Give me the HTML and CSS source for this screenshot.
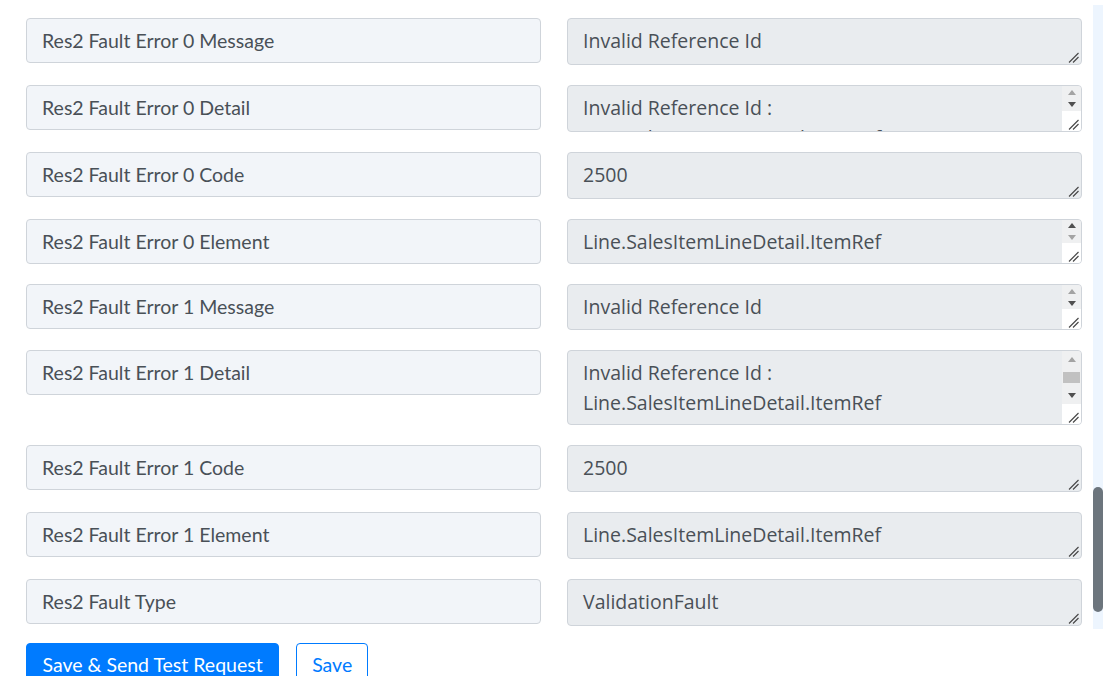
FILE: index.html
```html
<!DOCTYPE html>
<html lang="en">
<head>
<meta charset="utf-8">
<title>Response fields</title>
<link rel="stylesheet" href="styles.css">
</head>
<body>
<div class="page">
  <div class="form-area">
    <div class="fields">
      <input class="field-key" type="text" value="Res2 Fault Error 0 Message" readonly>
      <div class="field-value">
        <textarea class="value-box" readonly>Invalid Reference Id</textarea>
        <span class="grip"><svg width="11" height="11" viewBox="0 0 11 11"><path d="M1 10.5 L10.5 1 M5 10.5 L10.5 5" /></svg></span>
      </div>

      <input class="field-key" type="text" value="Res2 Fault Error 0 Detail" readonly>
      <div class="field-value">
        <textarea class="value-box" readonly>Invalid Reference Id :
Line.SalesItemLineDetail.ItemRef</textarea>
        <span class="vscroll">
          <span class="sb-arrows">
            <span class="sb-btn"><span class="tri-up off"></span></span>
            <span class="sb-btn"><span class="tri-down"></span></span>
          </span>
          <span class="sb-corner"><svg width="11" height="11" viewBox="0 0 11 11"><path d="M1 10.5 L10.5 1 M5 10.5 L10.5 5" /></svg></span>
        </span>
      </div>

      <input class="field-key" type="text" value="Res2 Fault Error 0 Code" readonly>
      <div class="field-value">
        <textarea class="value-box" readonly>2500</textarea>
        <span class="grip"><svg width="11" height="11" viewBox="0 0 11 11"><path d="M1 10.5 L10.5 1 M5 10.5 L10.5 5" /></svg></span>
      </div>

      <input class="field-key" type="text" value="Res2 Fault Error 0 Element" readonly>
      <div class="field-value">
        <textarea class="value-box h-45" readonly>Line.SalesItemLineDetail.ItemRef</textarea>
        <span class="vscroll">
          <span class="sb-arrows">
            <span class="sb-btn"><span class="tri-up"></span></span>
            <span class="sb-btn"><span class="tri-down off"></span></span>
          </span>
          <span class="sb-corner"><svg width="11" height="11" viewBox="0 0 11 11"><path d="M1 10.5 L10.5 1 M5 10.5 L10.5 5" /></svg></span>
        </span>
      </div>

      <input class="field-key" type="text" value="Res2 Fault Error 1 Message" readonly>
      <div class="field-value">
        <textarea class="value-box h-46" readonly>Invalid Reference Id</textarea>
        <span class="vscroll">
          <span class="sb-arrows">
            <span class="sb-btn"><span class="tri-up off"></span></span>
            <span class="sb-btn"><span class="tri-down"></span></span>
          </span>
          <span class="sb-corner"><svg width="11" height="11" viewBox="0 0 11 11"><path d="M1 10.5 L10.5 1 M5 10.5 L10.5 5" /></svg></span>
        </span>
      </div>

      <input class="field-key" type="text" value="Res2 Fault Error 1 Detail" readonly>
      <div class="field-value">
        <textarea class="value-box h-75" readonly>Invalid Reference Id :
Line.SalesItemLineDetail.ItemRef</textarea>
        <span class="vscroll">
          <span class="sb-arrows">
            <span class="sb-btn tall"><span class="tri-up off"></span></span>
            <span class="sb-track"><span class="sb-thumb"></span></span>
            <span class="sb-btn tall"><span class="tri-down"></span></span>
          </span>
          <span class="sb-corner"><svg width="11" height="11" viewBox="0 0 11 11"><path d="M1 10.5 L10.5 1 M5 10.5 L10.5 5" /></svg></span>
        </span>
      </div>

      <input class="field-key" type="text" value="Res2 Fault Error 1 Code" readonly>
      <div class="field-value">
        <textarea class="value-box" readonly>2500</textarea>
        <span class="grip"><svg width="11" height="11" viewBox="0 0 11 11"><path d="M1 10.5 L10.5 1 M5 10.5 L10.5 5" /></svg></span>
      </div>

      <input class="field-key" type="text" value="Res2 Fault Error 1 Element" readonly>
      <div class="field-value">
        <textarea class="value-box" readonly>Line.SalesItemLineDetail.ItemRef</textarea>
        <span class="grip"><svg width="11" height="11" viewBox="0 0 11 11"><path d="M1 10.5 L10.5 1 M5 10.5 L10.5 5" /></svg></span>
      </div>

      <input class="field-key" type="text" value="Res2 Fault Type" readonly>
      <div class="field-value">
        <textarea class="value-box" readonly>ValidationFault</textarea>
        <span class="grip"><svg width="11" height="11" viewBox="0 0 11 11"><path d="M1 10.5 L10.5 1 M5 10.5 L10.5 5" /></svg></span>
      </div>
    </div>

    <div class="page-scrollbar">
      <div class="page-thumb"></div>
    </div>
  </div>

  <div class="actions">
    <button class="btn btn-primary" type="button">Save &amp; Send Test Request</button>
    <button class="btn btn-outline" type="button">Save</button>
  </div>
</div>
</body>
</html>
```

FILE: styles.css
```css
* {
  box-sizing: border-box;
}

html,
body {
  margin: 0;
  height: 100%;
  overflow: hidden;
  background: #ffffff;
}

body {
  font-family: Lato, "Open Sans", Arial, sans-serif;
  color: #495057;
}

.page {
  padding: 5px 15px 0 26px;
}

.form-area {
  display: flex;
  gap: 11px;
  height: 624px;
}

.fields {
  width: 1056px;
  overflow: hidden;
  padding-top: 13px;
  display: grid;
  grid-template-columns: 515px 515px;
  column-gap: 26px;
  row-gap: 20px;
  align-content: start;
  align-items: start;
}

.field-key {
  display: block;
  width: 100%;
  height: 45px;
  margin: 0;
  padding: 0 15px;
  border: 1px solid #cfd4da;
  border-radius: 4px;
  background: #f2f5f9;
  font-family: Lato, "Open Sans", Arial, sans-serif;
  font-size: 19.5px;
  color: #495057;
  outline: none;
}

.field-value {
  position: relative;
}

.value-box {
  display: block;
  width: 100%;
  height: 47px;
  margin: 0;
  padding: 7px 15px 7px 15px;
  border: 1px solid #cfd4da;
  border-radius: 4px;
  background: #e9ecef;
  font-family: "Open Sans", Lato, Arial, sans-serif;
  font-size: 19.5px;
  line-height: 30px;
  color: #495057;
  resize: none;
  overflow: hidden;
  outline: none;
}

.value-box.h-45 {
  height: 45px;
}

.value-box.h-46 {
  height: 46px;
}

.value-box.h-75 {
  height: 75px;
}

/* resize grip in the bottom-right corner */
.grip {
  position: absolute;
  right: 3px;
  bottom: 2px;
  width: 11px;
  height: 11px;
  display: block;
}

.grip svg,
.sb-corner svg {
  display: block;
}

.grip path,
.sb-corner path {
  stroke: #4a4a4a;
  stroke-width: 1.2;
  fill: none;
}

/* inner scrollbar of overflowing text boxes */
.vscroll {
  position: absolute;
  top: 1px;
  right: 1px;
  bottom: 1px;
  width: 19px;
  display: flex;
  flex-direction: column;
  border-top-right-radius: 3px;
  border-bottom-right-radius: 3px;
  overflow: hidden;
}

.sb-arrows {
  flex: 1;
  display: flex;
  flex-direction: column;
  background: #eff0f1;
}

.sb-btn {
  flex: 1;
  display: flex;
  align-items: center;
  justify-content: center;
}

.sb-btn.tall {
  flex: 0 0 17px;
}

.sb-track {
  flex: 1;
  display: flex;
  align-items: center;
  justify-content: center;
}

.sb-thumb {
  display: block;
  width: 17px;
  height: 11px;
  background: #c1c1c1;
}

.tri-up,
.tri-down {
  display: block;
  width: 0;
  height: 0;
  border-left: 4.5px solid transparent;
  border-right: 4.5px solid transparent;
}

.tri-up {
  border-bottom: 5px solid #505050;
}

.tri-down {
  border-top: 5px solid #505050;
}

.tri-up.off {
  border-bottom-color: #a3a3a3;
}

.tri-down.off {
  border-top-color: #a3a3a3;
}

.sb-corner {
  flex: 0 0 20px;
  background: #ffffff;
  display: flex;
  align-items: flex-end;
  justify-content: flex-end;
  padding: 0 2px 1px 0;
}

.page-scrollbar {
  width: 10px;
  background: #edf5fe;
}

.page-thumb {
  width: 10px;
  height: 125px;
  margin-top: 482px;
  border-radius: 5px;
  background: #6c757d;
}

/* footer buttons */
.actions {
  display: flex;
  gap: 17px;
  margin-top: 14px;
}

.btn {
  margin: 0;
  padding: 7px 15.5px 8px;
  border: 1px solid #007bff;
  border-radius: 4px;
  font-family: Lato, "Open Sans", Arial, sans-serif;
  font-size: 19.5px;
  line-height: 27px;
  cursor: pointer;
}

.btn-primary {
  background: #007bff;
  color: #ffffff;
}

.btn-outline {
  background: #ffffff;
  color: #007bff;
  padding-left: 15px;
  padding-right: 15px;
}
```
